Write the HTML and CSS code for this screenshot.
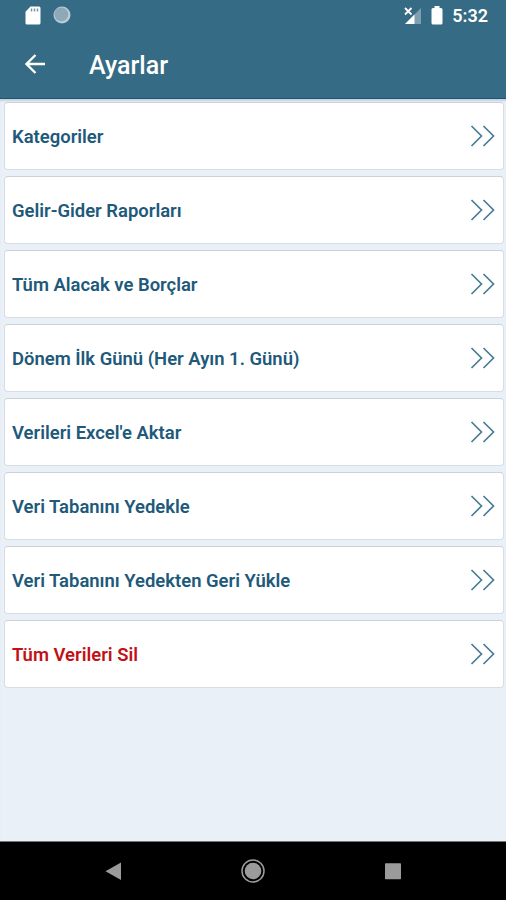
FILE: index.html
```html
<!DOCTYPE html>
<html lang="tr">
<head>
<meta charset="utf-8">
<title>Ayarlar</title>
<link rel="stylesheet" href="styles.css">
</head>
<body>
<svg class="defs" aria-hidden="true">
  <symbol id="chevrons" viewBox="0 0 26 22"><path d="M1.5 1 11.5 11 1.5 21M13.5 1 23.5 11 13.5 21"/></symbol>
</svg>
<div class="screen">
  <header class="header">
    <div class="status">
      <svg class="sd" viewBox="0 0 16 19"><path fill="#fff" d="M5.500.5h8.500a1.500 1.500 0 0 1 1.500 1.500v15a1.500 1.500 0 0 1-1.500 1.500H2A1.500 1.500 0 0 1 .5 17V5.800z"/><path stroke="#7797a7" stroke-width="1.500" d="M6.500 2.500v3M9.500 2.500v3M12.500 2.500v3"/></svg>
      <svg class="sync" viewBox="0 0 18 18"><circle cx="9" cy="9" r="8.500" fill="#b9cbd4"/><circle cx="8.300" cy="8.300" r="6.900" fill="#8da9b8"/></svg>
      <span class="spacer"></span>
      <svg class="signal" viewBox="0 0 18 18"><path fill="#7f9fb0" d="M17 1v16H1z"/><path fill="#fff" d="M10.500 7.500V17H1z"/><path fill="none" stroke="#fff" stroke-width="1.800" d="m1 1 6.500 6.500M7.500 1 1 7.500"/></svg>
      <svg class="battery" viewBox="0 0 12 19"><path fill="#fff" d="M3.500 0h5v2H10a1.500 1.500 0 0 1 1.500 1.500v13.500a1.500 1.500 0 0 1-1.500 1.500H2A1.500 1.500 0 0 1 .5 17V3.500A1.500 1.500 0 0 1 2 2h1.500z"/></svg>
      <span class="time">5:32</span>
    </div>
    <div class="toolbar">
      <svg class="back" viewBox="0 0 21 20"><path d="M20 10H2M10.500 1 1.500 10l9 9"/></svg>
      <h1 class="title">Ayarlar</h1>
    </div>
  </header>
  <main class="list">
    <div class="card"><span class="label">Kategoriler</span><svg class="chevrons"><use href="#chevrons"/></svg></div>
    <div class="card"><span class="label">Gelir-Gider Raporları</span><svg class="chevrons"><use href="#chevrons"/></svg></div>
    <div class="card"><span class="label">Tüm Alacak ve Borçlar</span><svg class="chevrons"><use href="#chevrons"/></svg></div>
    <div class="card"><span class="label">Dönem İlk Günü (Her Ayın 1. Günü)</span><svg class="chevrons"><use href="#chevrons"/></svg></div>
    <div class="card"><span class="label">Verileri Excel'e Aktar</span><svg class="chevrons"><use href="#chevrons"/></svg></div>
    <div class="card"><span class="label">Veri Tabanını Yedekle</span><svg class="chevrons"><use href="#chevrons"/></svg></div>
    <div class="card"><span class="label">Veri Tabanını Yedekten Geri Yükle</span><svg class="chevrons"><use href="#chevrons"/></svg></div>
    <div class="card"><span class="label danger">Tüm Verileri Sil</span><svg class="chevrons"><use href="#chevrons"/></svg></div>
  </main>
  <nav class="navbar">
    <svg class="nav-icon" viewBox="0 0 26 26"><path fill="#9b9b9b" d="M21 4.500v17.500L5.500 13.250z"/></svg>
    <svg class="nav-icon" viewBox="0 0 26 26"><circle cx="13" cy="13" r="11" fill="none" stroke="#9b9b9b" stroke-width="1.500"/><circle cx="13" cy="13" r="8.300" fill="#9b9b9b"/></svg>
    <svg class="nav-icon" viewBox="0 0 26 26"><rect x="5" y="5.200" width="16" height="16" rx=".7" fill="#9b9b9b"/></svg>
  </nav>
</div>
</body>
</html>
```
FILE: styles.css
```css
* { box-sizing: border-box; }
body { margin: 0; font-family: Roboto, "Liberation Sans", sans-serif; }
.defs { position: absolute; width: 0; height: 0; }
.screen { display: flex; flex-direction: column; width: 506px; height: 900px; background: #e9f0f8; }
.header { height: 99px; background: #356b84; border-bottom: 1px solid #12587a; color: #fff; }
.status { display: flex; align-items: center; height: 31px; padding: 0 18px 0 24.5px; }
.sd { width: 16px; height: 19px; margin-right: 12.5px; }
.sync { width: 18px; height: 18px; margin-top: -1px; }
.spacer { flex: 1; }
.signal { width: 18px; height: 18px; margin-right: 9px; }
.battery { width: 12px; height: 19px; margin-right: 9px; }
.time { font-size: 18px; font-weight: 600; line-height: 31px; }
.toolbar { display: flex; align-items: center; height: 67px; padding: 0 24.5px; }
.back { width: 21px; height: 20px; margin-top: -1px; fill: none; stroke: #fff; stroke-width: 2.3; }
.title { margin: 2px 0 0 43.5px; font-size: 25px; font-weight: 500; line-height: 32px; }
.list { flex: 1; display: flex; flex-direction: column; gap: 6px; padding: 3px 2px 0 4px; box-shadow: inset 0 3px 2px -1px #cbd0d9; }
.card { display: flex; align-items: center; justify-content: space-between; height: 68px; padding: 0 7px; background: #fff; border: 1px solid #d8dde3; border-top-color: #cdd2d8; border-radius: 4px; }
.label { padding-top: 2px; color: #20597a; font-size: 18.45px; font-weight: 600; line-height: 24px; white-space: nowrap; }
.danger { color: #c21016; }
.chevrons { width: 26px; height: 22px; fill: none; stroke: #497c94; stroke-width: 1.7; }
.navbar { display: flex; align-items: center; justify-content: space-between; height: 59px; padding: 0 100px; background: #000; border-top: 1px solid #777; }
.nav-icon { width: 26px; height: 26px; }
```
